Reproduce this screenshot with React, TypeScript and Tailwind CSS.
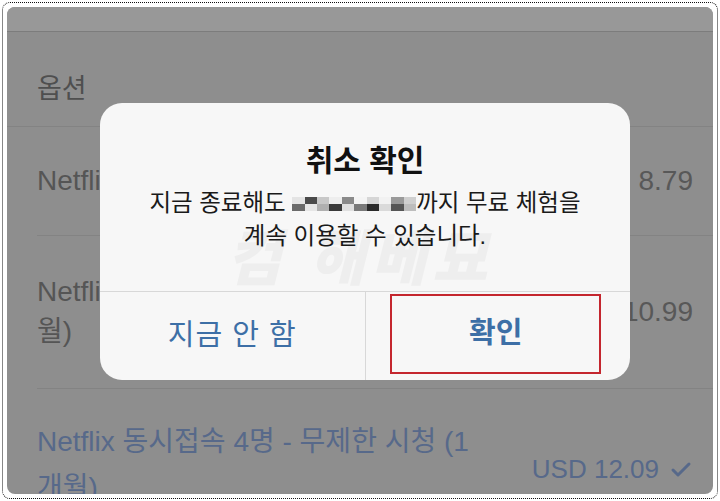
import { Check } from 'lucide-react'

const font = { fontFamily: '"Liberation Sans", "Noto Sans CJK KR", sans-serif' }

// mosaic blocks standing in for the blurred date
const mosaic = [
  '#e4e4e4', '#4a4a4a', '#c8c8c8', '#eeeeee', '#8a8a8a', '#f4f4f4', '#d6d6d6', '#f2f2f2', '#9a9a9a', '#cfcfcf',
  '#6a6a6a', '#e6e6e6', '#b0b0b0', '#3a3a3a', '#e0e0e0', '#7a7a7a', '#2a2a2a', '#dadada', '#555555', '#bdbdbd',
]

function Row({ children, price }: { children: React.ReactNode; price: string }) {
  return (
    <div className="flex items-center justify-between pr-[20px]">
      <div className="leading-[40px] text-[#555]">{children}</div>
      <div className="text-[#585858]">{price}</div>
    </div>
  )
}

export default function App() {
  return (
    <div className="w-[720px] h-[501px] bg-white p-[2px]" style={font}>
      <div className="h-full border border-dotted border-[#111] rounded-[8px] p-[4px]">
        <div className="relative h-full rounded-[8px] overflow-hidden bg-[#8e8e8e] text-[28px]">
          <div className="h-[25px] bg-[#989898] border-b border-[#7c7c7c]" />
          <div className="h-[95px] flex items-center pl-[30px] pt-[20px] text-[27px] text-[#4f4f4f] border-b border-[#838383]">
            옵션
          </div>

          <div className="pl-[30px]">
            <div className="h-[109px] flex flex-col justify-center border-b border-[#838383]">
              <Row price="USD 8.79">Netflix 동시접속 1명 (1개월)</Row>
            </div>
            <div className="h-[153px] flex flex-col justify-center border-b border-[#838383]">
              <Row price="USD 10.99">
                Netflix 동시접속 2명 - HD 화질 (1개
                <br />
                월)
              </Row>
            </div>
            <div className="pt-[30px]">
              <div className="flex items-end justify-between pr-[20px] text-[#57698a]">
                <div className="leading-[46px]">
                  Netflix 동시접속 4명 - 무제한 시청 (1
                  <br />
                  개월)
                </div>
                <div className="flex items-center gap-[10px] pb-[22px] text-[26px]">
                  USD 12.09
                  <Check size={24} strokeWidth={3} />
                </div>
              </div>
            </div>
          </div>

          {/* alert */}
          <div className="absolute left-[93px] top-[96px] w-[530px] h-[277px] rounded-[22px] bg-[#f7f7f7] overflow-hidden flex flex-col">
            <div className="relative h-[189px] border-b border-[#d8d8d8] flex flex-col items-center pt-[40px]">
              <div className="absolute left-[126px] top-[112px] text-[60px] italic font-black text-[#eeeeee] tracking-[6px] select-none">
                컴 해베묘
              </div>
              <div className="relative text-[30px] font-bold text-[#111] leading-[36px]">취소 확인</div>
              <div className="relative mt-[8px] text-[23.5px] leading-[33px] text-[#1a1a1a] text-center">
                <div className="flex items-center">
                  지금 종료해도&nbsp;
                  <span className="inline-grid grid-cols-10 w-[124px] h-[14px]">
                    {mosaic.map((c, i) => (
                      <span key={i} style={{ background: c }} />
                    ))}
                  </span>
                  까지 무료 체험을
                </div>
                <div>계속 이용할 수 있습니다.</div>
              </div>
            </div>
            <div className="flex-1 flex">
              <div className="flex-1 flex items-center justify-center border-r border-[#d8d8d8] text-[29px] text-[#3d6fa6] tracking-[1px]">
                지금 안 함
              </div>
              <div className="flex-1 flex items-center justify-center">
                <div className="w-[211px] h-[80px] border-2 border-[#c4262e] flex items-center justify-center text-[29px] font-semibold text-[#3d6fa6] ml-[-4px] mb-[4px]">
                  확인
                </div>
              </div>
            </div>
          </div>
        </div>
      </div>
    </div>
  )
}
